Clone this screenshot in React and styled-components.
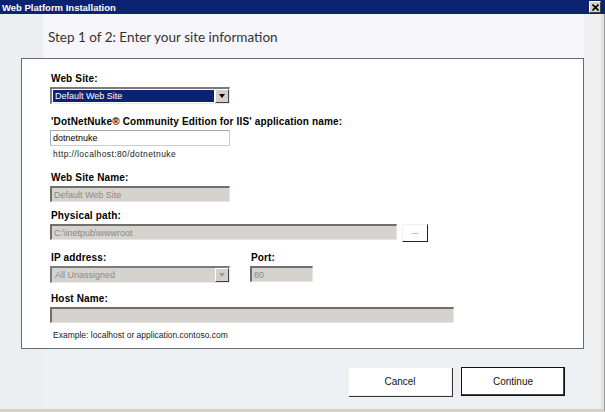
import React from "react";
import styled, { createGlobalStyle } from "styled-components";

const GlobalStyle = createGlobalStyle`
  html, body {
    margin: 0;
    padding: 0;
    background: #eeeff2;
  }
  body {
    font-family: "Liberation Sans", Arial, sans-serif;
  }
`;

const Window = styled.div`
  width: 605px;
  height: 412px;
  display: flex;
  flex-direction: column;
  background: #eeeff2;
  overflow: hidden;
`;

const TitleBar = styled.div`
  height: 14px;
  flex: none;
  background: #0b2370;
  display: flex;
  align-items: center;
  justify-content: space-between;
  padding: 0 4px 0 2px;
  color: #fff;
  font: bold 9.5px "Liberation Sans", Arial, sans-serif;
`;

const CloseButton = styled.div`
  width: 10px;
  height: 10px;
  background: #d4d0c8;
  border-top: 1px solid #fff;
  border-left: 1px solid #fff;
  border-right: 1px solid #404040;
  border-bottom: 1px solid #404040;
  display: flex;
  align-items: center;
  justify-content: center;
`;

const Frame = styled.div`
  flex: 1;
  display: flex;
  border-right: 1px solid #9a9a9a;
  border-bottom: 3px solid #d4d0c8;
  box-shadow: inset -3px 0 0 #e4e3e0;
`;

const Body = styled.div`
  flex: 1;
  display: flex;
  flex-direction: column;
  background: linear-gradient(to right, #eceef1 0, #eceef1 43px, transparent 43px);
`;

const Header = styled.div`
  height: 45px;
  flex: none;
  margin: 0 20px 0 43px;
  background: #f6f6fa;
  display: flex;
  align-items: center;
  padding: 1px 0 0 5px;
  box-sizing: border-box;
  font: 13.5px Lato, "Open Sans", sans-serif;
  color: #333;
`;

const Panel = styled.div`
  margin: -1px 20px 0 21px;
  height: 291px;
  box-sizing: border-box;
  background: #fff;
  border: 1px solid #6a6a6a;
  padding: 14px 0 0 28px;
  display: flex;
  flex-direction: column;
`;

const Label = styled.div`
  font: bold 10px "Liberation Sans", Arial, sans-serif;
  color: #000;
  height: 11px;
  line-height: 11px;
  margin: ${(p) => p.$top || 0}px 0 3px 1px;
  letter-spacing: 0.15px;
  white-space: nowrap;
`;

const Hint = styled.div`
  font: 8.5px "Liberation Sans", Arial, sans-serif;
  color: #1a1a1a;
  height: 11px;
  line-height: 11px;
  margin: ${(p) => p.$top || 0}px 0 0 3px;
  letter-spacing: ${(p) => p.$spread || 0}px;
`;

const Field = styled.div`
  box-sizing: border-box;
  width: ${(p) => p.$w}px;
  height: 16px;
  display: flex;
  align-items: center;
  font: 9px "Liberation Sans", Arial, sans-serif;
  padding-left: 2px;
  background: ${(p) => (p.$disabled ? "#d6d3ce" : "#fff")};
  color: ${(p) => (p.$disabled ? "#8a8a8a" : "#000")};
  border-top: ${(p) => (p.$disabled ? "2px solid #6f6f6f" : "1px solid #a5acb5")};
  border-left: ${(p) => (p.$disabled ? "2px solid #6f6f6f" : "1px solid #a5acb5")};
  border-right: 1px solid ${(p) => (p.$disabled ? "#e6e4df" : "#c9cdd3")};
  border-bottom: 1px solid ${(p) => (p.$disabled ? "#e6e4df" : "#c9cdd3")};
`;

const Select = styled.div`
  box-sizing: border-box;
  width: 180px;
  height: 17px;
  display: flex;
  align-items: stretch;
  border-top: 2px solid #7a7a7a;
  border-left: 2px solid #7a7a7a;
  border-right: 1px solid #e8e8e8;
  border-bottom: 1px solid #e8e8e8;
  background: ${(p) => (p.$disabled ? "#d6d3ce" : "#fff")};
  font: 9px "Liberation Sans", Arial, sans-serif;
`;

const SelectValue = styled.div`
  flex: 1;
  display: flex;
  align-items: center;
  padding-left: 2px;
  margin: 1px;
  background: ${(p) => (p.$selected ? "#0b2370" : "transparent")};
  color: ${(p) => (p.$selected ? "#fff" : "#8a8a8a")};
`;

const ArrowButton = styled.div`
  width: 14px;
  flex: none;
  box-sizing: border-box;
  background: #d4d0c8;
  border-top: 1px solid #fff;
  border-left: 1px solid #fff;
  border-right: 1px solid #404040;
  border-bottom: 1px solid #404040;
  display: flex;
  align-items: center;
  justify-content: center;
`;

const Arrow = styled.div`
  width: 0;
  height: 0;
  border-left: 3.5px solid transparent;
  border-right: 3.5px solid transparent;
  border-top: 4px solid ${(p) => (p.$disabled ? "#9a9a9a" : "#000")};
`;

const Row = styled.div`
  display: flex;
  align-items: flex-start;
  gap: ${(p) => p.$gap || 0}px;
`;

const Column = styled.div`
  display: flex;
  flex-direction: column;
`;

const BrowseButton = styled.div`
  width: 26px;
  height: 18px;
  box-sizing: border-box;
  background: #fff;
  border-right: 1px solid #222;
  border-bottom: 1px solid #222;
  border-top: 1px solid #f0f0f0;
  border-left: 1px solid #f0f0f0;
  display: flex;
  align-items: center;
  justify-content: center;
  font: 8px "Liberation Sans", Arial, sans-serif;
  color: #333;
  padding-bottom: 3px;
`;

const Footer = styled.div`
  flex: 1;
  display: flex;
  justify-content: flex-end;
  align-items: flex-start;
  gap: 9px;
  padding: 18px 39px 0 0;
`;

const Button = styled.div`
  width: 104px;
  height: 29px;
  box-sizing: border-box;
  background: #fff;
  display: flex;
  align-items: center;
  justify-content: center;
  font: 10px "Liberation Sans", Arial, sans-serif;
  color: #111;
  border: 1px solid ${(p) => (p.$primary ? "#111" : "#f2f2f2")};
  box-shadow: ${(p) =>
    p.$primary
      ? "inset -1px -1px 0 #444, inset 1px 1px 0 #fff"
      : "1px 1px 0 #333"};
`;

export default function App() {
  return (
    <>
      <GlobalStyle />
      <Window>
        <TitleBar>
          <span>Web Platform Installation</span>
          <CloseButton>
            <svg width="7" height="7" viewBox="0 0 7 7">
              <path d="M0.5 0.5 L6.5 6.5 M6.5 0.5 L0.5 6.5" stroke="#000" strokeWidth="1.6" />
            </svg>
          </CloseButton>
        </TitleBar>
        <Frame>
          <Body>
            <Header>Step 1 of 2: Enter your site information</Header>
            <Panel>
              <Label>Web Site:</Label>
              <Select>
                <SelectValue $selected>Default Web Site</SelectValue>
                <ArrowButton>
                  <Arrow />
                </ArrowButton>
              </Select>

              <Label $top={12}>'DotNetNuke® Community Edition for IIS' application name:</Label>
              <Field $w={180}>dotnetnuke</Field>
              <Hint $top={3} $spread={0.4}>http://localhost:80/dotnetnuke</Hint>

              <Label $top={12}>Web Site Name:</Label>
              <Field $w={180} $disabled>
                Default Web Site
              </Field>

              <Label $top={8}>Physical path:</Label>
              <Row $gap={5}>
                <Field $w={347} $disabled>
                  C:\inetpub\wwwroot
                </Field>
                <BrowseButton>...</BrowseButton>
              </Row>

              <Row $gap={20}>
                <Column>
                  <Label $top={10}>IP address:</Label>
                  <Select $disabled>
                    <SelectValue>All Unassigned</SelectValue>
                    <ArrowButton>
                      <Arrow $disabled />
                    </ArrowButton>
                  </Select>
                </Column>
                <Column>
                  <Label $top={10}>Port:</Label>
                  <Field $w={63} $disabled>
                    80
                  </Field>
                </Column>
              </Row>

              <Label $top={10}>Host Name:</Label>
              <Field $w={404} $disabled />
              <Hint $top={7}>Example: localhost or application.contoso.com</Hint>
            </Panel>
            <Footer>
              <Button>Cancel</Button>
              <Button $primary>Continue</Button>
            </Footer>
          </Body>
        </Frame>
      </Window>
    </>
  );
}
